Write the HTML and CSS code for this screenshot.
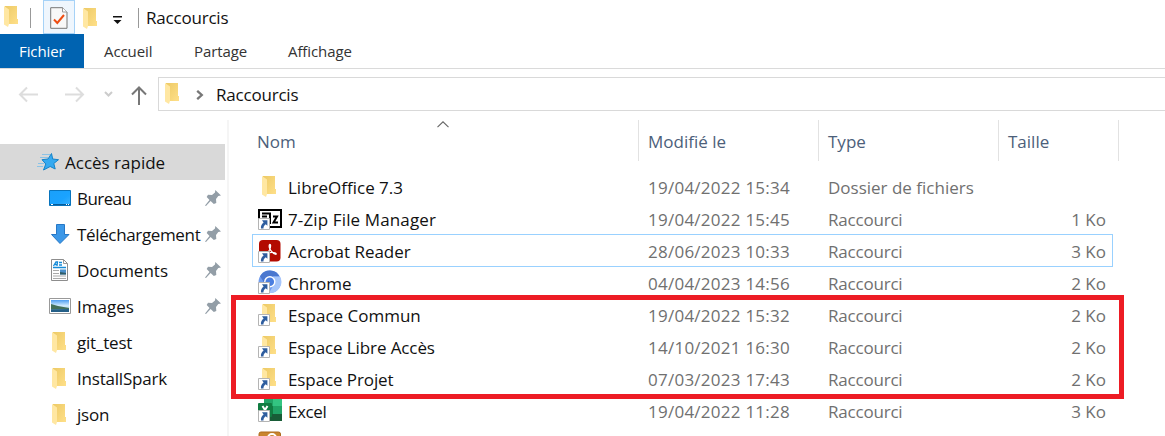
FILE: index.html
```html
<!DOCTYPE html>
<html lang="fr">
<head>
<meta charset="utf-8">
<title>Raccourcis</title>
<link rel="stylesheet" href="styles.css">
</head>
<body>
<svg class="defs" width="0" height="0" aria-hidden="true">
  <defs>
    <linearGradient id="gold" x1="0" y1="0" x2="1" y2="1"><stop offset="0" stop-color="#edca66"/><stop offset="1" stop-color="#ffe08a"/></linearGradient>
    <linearGradient id="sky" x1="0" y1="0" x2="0" y2="1"><stop offset="0" stop-color="#4d9df0"/><stop offset=".5" stop-color="#d9efff"/><stop offset="1" stop-color="#3d7ea8"/></linearGradient>
    <linearGradient id="blue" x1="0" y1="0" x2="1" y2="1"><stop offset="0" stop-color="#1aa0fa"/><stop offset=".6" stop-color="#1aa3ff"/><stop offset="1" stop-color="#3db2fc"/></linearGradient>
    <symbol id="folder" viewBox="0 0 14 21"><path d="M1 0H13V13H14V18H4V19H1Z" fill="url(#gold)"/><path d="M0 0L5 3.5V18L4 21L0 18.5Z" fill="#ffe7a2"/></symbol>
    <symbol id="link" viewBox="0 0 12 12"><path d="M.5 .5H11.5V11.5H.5Z" fill="#fff" stroke="#b4b4b4"/><path d="M4 2.2H9.4V7.7L7.7 6.2C6 7.5 5.4 8.6 5.5 10.5H3C2.6 8 3.6 6 5.6 4.4Z" fill="#2e5d9f"/></symbol>
    <symbol id="pin" viewBox="0 0 16 16"><path d="M10.3 0L16 5.5L13.3 6L11 9L11.3 13L8.8 14L5.6 10.9L1 16L0 15.5L4.5 9.9L1.7 7L3 4.7L7 5L10 2.4Z" fill="#939ea7"/></symbol>
  </defs>
</svg>

<header class="titlebar">
  <svg class="t-folder"><use href="#folder"/></svg>
  <i class="sep sep-a"></i>
  <span class="prop"><svg width="18" height="22" viewBox="0 0 18 22"><path d="M.7 .7H12.5L17 5V21.3H.7Z" fill="#f8f8f8" stroke="#777"/><path d="M12.5 .7V5H17" fill="#fff" stroke="#999"/><path d="M4 12.5L7.3 16L14 8" fill="none" stroke="#ee4d12" stroke-width="2"/></svg></span>
  <svg class="t-folder t-folder-b"><use href="#folder"/></svg>
  <svg class="more" width="9" height="9" viewBox="0 0 9 9"><path d="M0 0H9V1.5H0ZM.5 4H8.5L4.5 8Z" fill="#111"/></svg>
  <i class="sep sep-b"></i>
  <span class="title">Raccourcis</span>
</header>

<nav class="tabs">
  <span class="tab file">Fichier</span><span class="tab t1">Accueil</span><span class="tab t2">Partage</span><span class="tab t3">Affichage</span>
</nav>

<div class="navbar">
  <svg class="arrows" width="158" height="50" viewBox="0 0 158 50" fill="none">
    <path d="M38 25.5H20.5M27 18.5L20 25.5L27 32.5" stroke="#ddd" stroke-width="2"/>
    <path d="M65 25.5H82.5M76 18.5L83 25.5L76 32.5" stroke="#ddd" stroke-width="2"/>
    <path d="M105 23L108.5 26.5L112 23" stroke="#ccc" stroke-width="2"/>
    <path d="M139 36V19M132 25.5L139 18.5L146 25.5" stroke="#777" stroke-width="2"/>
  </svg>
  <div class="address">
    <svg class="a-folder"><use href="#folder"/></svg>
    <svg class="chev" width="8" height="10" viewBox="0 0 8 10"><path d="M1.2 .8L5.8 5L1.2 9.2" fill="none" stroke="#777" stroke-width="2.3"/></svg>
    <span>Raccourcis</span>
  </div>
</div>

<main class="body">
  <aside class="side">
    <div class="item quick">
      <svg class="star" width="23" height="20" viewBox="0 0 23 20"><path d="M14.5 1.5L15.7 7L21.5 7.7L16.8 11.5L18.2 17L13.2 14.5L6.5 18L8.8 12L5 7.7L11 7Z" fill="#36aaf0" stroke="#1583c9"/><path d="M5 2.5H13M3 5.5H11M1 11.5H7M0 14.5H6" stroke="#8cc3e6"/></svg>
      <span>Accès rapide</span>
    </div>
    <div class="item"><svg class="ico" viewBox="0 0 22 24"><path d="M.5 4.5H21.5V19.5H.5Z" fill="url(#blue)" stroke="#0874bd"/><path d="M1 18.5H21" stroke="#075b98"/><path d="M2 18.5H4M17 18.5H18M19 18.5H20" stroke="#fff"/></svg><span class="n-bureau">Bureau</span><svg class="pin"><use href="#pin"/></svg></div>
    <div class="item"><svg class="ico" viewBox="0 0 22 24"><path d="M7.5 2.5H15.5V12.5H20L11 21.5L2.5 12.5H7.5Z" fill="#3c98e8" stroke="#2778c6"/></svg><span class="n-tel">Téléchargement</span><svg class="pin"><use href="#pin"/></svg></div>
    <div class="item"><svg class="ico" viewBox="0 0 22 24"><path d="M2.5 1.5H14.5L18.5 5.5V22.5H2.5Z" fill="#fff" stroke="#8d8d8d"/><path d="M14.5 1.5V5.5H18.5" fill="none" stroke="#999"/><path d="M4.5 8L7 4H8.5L8 8M6 6.5H8M10 4.5H13M10 7H13M4 9.5H17" fill="none" stroke="#168bd8" stroke-width="1.3"/><path d="M4 12.5H10M4 15.5H10M4 18H17M4 20.5H17" stroke="#aaa"/><path d="M11 11.5H17V16.5H11Z" fill="#4b8fca"/><path d="M11 14L17 15V16.5H11Z" fill="#315d67"/></svg><span class="n-doc">Documents</span><svg class="pin"><use href="#pin"/></svg></div>
    <div class="item"><svg class="ico" viewBox="0 0 22 24"><path d="M.5 4.5H21.5V19.5H.5Z" fill="#fff" stroke="#999"/><path d="M2 6H20V18H2Z" fill="url(#sky)"/><path d="M2 10L9 12L20 14V15L2 15.5Z" fill="#44705a"/><path d="M2 15.5L20 15V18H2Z" fill="#245f87"/></svg><span class="n-doc">Images</span><svg class="pin"><use href="#pin"/></svg></div>
    <div class="item"><svg class="ico fold"><use href="#folder"/></svg><span>git_test</span></div>
    <div class="item"><svg class="ico fold"><use href="#folder"/></svg><span>InstallSpark</span></div>
    <div class="item"><svg class="ico fold"><use href="#folder"/></svg><span>json</span></div>
  </aside>

  <section class="list">
    <div class="head">
      <span class="c-name">Nom<svg class="sort" width="12" height="7" viewBox="0 0 12 7"><path d="M.5 6.2L6 .8L11.5 6.2" fill="none" stroke="#666" stroke-width="1.1"/></svg></span><span class="c-date">Modifié le</span><span class="c-type">Type</span><span class="c-size">Taille</span>
    </div>
    <div class="row"><svg class="fi" viewBox="0 0 24 24"><use href="#folder" x="4" y="2" width="14" height="21"/></svg><span class="name">LibreOffice 7.3</span><span class="date">19/04/2022 15:34</span><span class="type dossier">Dossier de fichiers</span><span class="size"></span></div>
    <div class="row"><svg class="fi" viewBox="0 0 24 24"><path d="M1 4H23V21H1Z" fill="#fff" stroke="#000" stroke-width="2"/><path d="M4 7.5H12V18M4 10.5H9M15 10.5H19L15.5 16.5H20" fill="none" stroke="#000" stroke-width="2"/><use href="#link" x="0" y="12" width="12" height="12"/></svg><span class="name zip">7-Zip File Manager</span><span class="date">19/04/2022 15:45</span><span class="type">Raccourci</span><span class="size">1 Ko</span></div>
    <div class="row selected"><svg class="fi" viewBox="0 0 24 24"><rect x="1" y="1" width="21.5" height="21.5" rx="4" fill="#b30b00"/><path d="M11.5 5.5C13 4.5 13 8 11.5 11L8 16M11.5 5.5C10 9 14 14.5 18 15.3C19.5 13.5 13 12.5 9 14.5" fill="none" stroke="#fff" stroke-width="1.2"/><use href="#link" x="0" y="12" width="12" height="12"/></svg><span class="name">Acrobat Reader</span><span class="date">28/06/2023 10:33</span><span class="type">Raccourci</span><span class="size">3 Ko</span></div>
    <div class="row"><svg class="fi" viewBox="0 0 24 24"><circle cx="11.8" cy="11.8" r="11.2" fill="#6f9cf0"/><path d="M2 6.2A11.2 11.2 0 0 1 21.8 6.5H12L7 14Z" fill="#4a77cf"/><path d="M22 6.5A11.2 11.2 0 0 1 11 23L16.5 13.5L15 6.5Z" fill="#a6c5fa"/><circle cx="11.8" cy="11.8" r="5.7" fill="#fff"/><circle cx="11.8" cy="11.8" r="4.3" fill="#4b7ee0"/><use href="#link" x="0" y="12" width="12" height="12"/></svg><span class="name">Chrome</span><span class="date">04/04/2023 14:56</span><span class="type">Raccourci</span><span class="size">2 Ko</span></div>
    <div class="row"><svg class="fi" viewBox="0 0 24 24"><use href="#folder" x="4" y="2" width="14" height="21"/><use href="#link" x="0" y="12" width="12" height="12"/></svg><span class="name">Espace Commun</span><span class="date">19/04/2022 15:32</span><span class="type">Raccourci</span><span class="size">2 Ko</span></div>
    <div class="row"><svg class="fi" viewBox="0 0 24 24"><use href="#folder" x="4" y="2" width="14" height="21"/><use href="#link" x="0" y="12" width="12" height="12"/></svg><span class="name tight">Espace Libre Accès</span><span class="date">14/10/2021 16:30</span><span class="type">Raccourci</span><span class="size">2 Ko</span></div>
    <div class="row"><svg class="fi" viewBox="0 0 24 24"><use href="#folder" x="4" y="2" width="14" height="21"/><use href="#link" x="0" y="12" width="12" height="12"/></svg><span class="name tight">Espace Projet</span><span class="date">07/03/2023 17:43</span><span class="type">Raccourci</span><span class="size">2 Ko</span></div>
    <div class="row"><svg class="fi" viewBox="0 0 24 24"><path d="M6 0H24V23H6Z" fill="#185c37"/><path d="M6 0H15V8H6Z" fill="#21a366"/><path d="M15 0H24V8H15Z" fill="#33c481"/><path d="M6 8H15V16H6Z" fill="#107c41"/><path d="M15 8H24V16H15Z" fill="#21a366"/><rect y="5" width="14" height="14" rx="1" fill="#107c41"/><path d="M4.5 8L9.5 16M9.5 8L4.5 16" stroke="#fff" stroke-width="2"/><use href="#link" x="0" y="12" width="12" height="12"/></svg><span class="name excel">Excel</span><span class="date">19/04/2022 11:28</span><span class="type">Raccourci</span><span class="size">3 Ko</span></div>
    <div class="row last"><svg class="fi" viewBox="0 0 24 24"><rect x="1" y="1" width="21.5" height="22" rx="2" fill="#c9852f" stroke="#ae6b1d"/><circle cx="14" cy="7" r="4" fill="none" stroke="#fff" stroke-width="2"/></svg></div>
  </section>
  <div class="highlight"></div>
</main>
</body>
</html>
```
FILE: styles.css
```css
* { box-sizing: border-box; }
body { margin: 0; width: 1165px; height: 436px; overflow: hidden; background: #fff; color: #111; font: 17px/24px "Open Sans", "Noto Sans", sans-serif; letter-spacing: -.2px; }
svg { display: block; flex: none; }
.defs { position: absolute; }
span { white-space: nowrap; }

.titlebar { display: flex; height: 34px; align-items: flex-start; }
.t-folder { width: 14px; height: 21px; margin: 6px 0 0 4px; }
.sep { width: 1px; height: 20px; margin-top: 8px; background: #999; }
.sep-a { margin-left: 12px; }
.prop { display: flex; width: 32px; height: 34px; margin-left: 12px; padding: 6px 0 0 6px; background: #eff6fd; border: 1px solid #a6d2f7; }
.t-folder-b { margin: 8px 0 0 8px; }
.more { margin: 16px 0 0 16px; }
.sep-b { margin-left: 16px; }
.title { margin: 6px 0 0 7px; }

.tabs { display: flex; height: 35px; border-bottom: 1px solid #dadada; font-size: 15px; letter-spacing: -.1px; color: #333; line-height: 35px; }
.file { width: 84px; height: 34px; padding-left: 19px; background: #0063b1; color: #fff; }
.t1 { width: 90px; padding-left: 20px; }
.t2 { width: 94px; padding-left: 20px; }
.t3 { padding-left: 20px; }

.navbar { display: flex; height: 51px; }
.address { display: flex; flex: 1; height: 34px; margin-top: 8px; border: 1px solid #d9d9d9; border-right: 0; }
.a-folder { width: 14px; height: 21px; margin: 5px 0 0 6px; }
.chev { margin: 12px 0 0 17px; }
.address span { margin: 5px 0 0 12px; }

.body { display: flex; position: relative; height: 316px; }
.side { width: 227px; padding-top: 24px; }
.item { display: flex; align-items: center; width: 225px; height: 36px; padding-left: 49px; }
.item span { flex: 1; margin-left: 6px; padding-top: 1px; }
.item .n-bureau { letter-spacing: -.55px; }
.item .n-tel { letter-spacing: -.35px; }
.item .n-doc { letter-spacing: 0; }
.quick { padding-left: 37px; background: #d9d9d9; }
.item.quick span { margin-left: 5px; letter-spacing: 0; }
.ico { width: 22px; height: 24px; }
.fold { width: 14px; height: 21px; margin: 0 5px 0 3px; }
.pin { width: 16px; height: 16px; margin-right: 4px; }

.list { flex: 1; border-left: 2px solid #f5f5f5; }
.head { display: flex; height: 41px; margin-bottom: 9px; color: #4c607a; letter-spacing: 0; }
.head span { padding: 10px 0 0 9px; border-right: 1px solid #e2e2e2; }
.head .c-name { position: relative; width: 410px; padding-left: 28px; }
.c-date, .c-type { width: 180px; }
.c-size { width: 120px; }
.sort { position: absolute; left: 208px; top: 1px; }
.row { display: flex; align-items: center; width: 861px; height: 32px; margin-left: 23px; padding-left: 6px; color: #707070; }
.row span { flex: none; padding-top: 3px; }
.row .name { width: 366px; padding-left: 6px; color: #111; letter-spacing: 0; }
.row .tight { letter-spacing: -.1px; }
.row .zip { letter-spacing: .13px; }
.row .excel { letter-spacing: -.4px; }
.date { width: 180px; letter-spacing: .25px; }
.type { width: 180px; }
.dossier { letter-spacing: 0; }
.size { width: 98px; text-align: right; letter-spacing: 0; }
.fi { width: 24px; height: 24px; }
.selected { height: 33px; margin-bottom: -1px; padding: 0 0 0 5px; border: 1px solid #99d1ff; }
.last { height: 10px; padding-top: 5px; align-items: flex-start; overflow: hidden; }

.highlight { position: absolute; left: 231px; top: 175px; width: 893px; height: 104px; border: 5px solid #ed1c24; }
```
